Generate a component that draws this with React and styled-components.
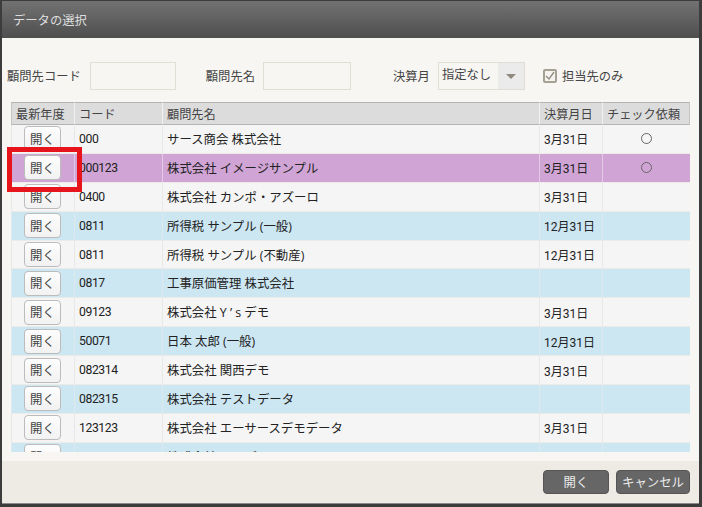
import React from "react";
import styled, { createGlobalStyle } from "styled-components";

const rows = [
	{ code: "000", name: "サース商会 株式会社", month: "3月31日", check: true },
	{ code: "000123", name: "株式会社 イメージサンプル", month: "3月31日", check: true, selected: true },
	{ code: "0400", name: "株式会社 カンポ・アズーロ", month: "3月31日" },
	{ code: "0811", name: "所得税 サンプル (一般)", month: "12月31日" },
	{ code: "0811", name: "所得税 サンプル (不動産)", month: "12月31日" },
	{ code: "0817", name: "工事原価管理 株式会社", month: "" },
	{ code: "09123", name: "株式会社 Y ’ s デモ", month: "3月31日" },
	{ code: "50071", name: "日本 太郎 (一般)", month: "12月31日" },
	{ code: "082314", name: "株式会社 関西デモ", month: "3月31日" },
	{ code: "082315", name: "株式会社 テストデータ", month: "" },
	{ code: "123123", name: "株式会社 エーサースデモデータ", month: "3月31日" },
	{ code: "", name: "株式会社 サンプル", month: "" },
];

const stripes = ["#f5f5f5", "#cce6f2"];
const stripeOrder = [0, 0, 0, 1, 0, 1, 0, 1, 0, 1, 0, 1];

const GlobalStyle = createGlobalStyle`
	html, body {
		margin: 0;
		padding: 0;
		background: #3c3c3c;
	}
	body {
		font-family: "Open Sans", "Noto Sans CJK JP", sans-serif;
		font-size: 12.3px;
		color: #333;
	}
`;

const Dialog = styled.div`
	width: 702px;
	height: 507px;
	box-sizing: border-box;
	display: flex;
	flex-direction: column;
	border: solid 1px #3c3c3c;
	border-width: 1px 3px 3px 2px;
	position: relative;
	overflow: hidden;
`;

const TitleBar = styled.div`
	height: 37px;
	flex: none;
	display: flex;
	align-items: center;
	padding-left: 11px;
	color: #dedede;
	font-size: 12.3px;
	background: linear-gradient(#727272, #4e4e4e);
`;

const Content = styled.div`
	flex: 1;
	min-height: 0;
	background: #f7f6f2;
	padding: 24px 9px 9px 9px;
	display: flex;
	flex-direction: column;
`;

const FilterRow = styled.div`
	height: 28px;
	flex: none;
	display: flex;
	align-items: center;
	margin: 0 0 12px -4px;
`;

const FieldLabel = styled.label`
	color: #444;
	white-space: nowrap;
	margin-left: ${(p) => p.$gap}px;
	margin-right: ${(p) => p.$after || 8}px;
`;

const TextInput = styled.div`
	width: ${(p) => p.$width}px;
	height: 28px;
	box-sizing: border-box;
	border: solid 1px #e1dfd5;
	background: #f7f6f2;
`;

const Select = styled.div`
	width: 87px;
	height: 28px;
	box-sizing: border-box;
	border: solid 1px #e1dfd5;
	display: flex;
	align-items: stretch;
	color: #444;
	.value {
		flex: 1;
		line-height: 24px;
		padding-left: 3px;
		white-space: nowrap;
	}
	.arrow {
		width: 26px;
		background: #ebebeb;
		display: flex;
		align-items: center;
		justify-content: center;
	}
	.arrow::after {
		content: "";
		border: solid 5px transparent;
		border-top: solid 5px #8f8a7c;
		margin-top: 5px;
	}
`;

const CheckLabel = styled.label`
	display: flex;
	align-items: center;
	gap: 5px;
	margin-left: 18px;
	color: #444;
	white-space: nowrap;
`;

const CheckBox = styled.span`
	width: 14px;
	height: 14px;
	box-sizing: border-box;
	border: solid 2px #a5a294;
	border-radius: 2px;
	background: #f4f3ef;
	display: flex;
	align-items: center;
	justify-content: center;
`;

const GridWrap = styled.div`
	flex: 1;
	min-height: 0;
	overflow: hidden;
	width: 679px;
`;

const Table = styled.div`
	display: grid;
	grid-template-columns: 63px 88px 377px 63px 88px;
`;

const HeadCell = styled.div`
	height: 21px;
	background: #dcdcdc;
	border-top: solid 1px #b4b4b4;
	border-bottom: solid 1px #b4b4b4;
	border-left: solid 1px ${(p) => (p.$first ? "#c4c4c4" : "#f2f2f2")};
	border-right: ${(p) => (p.$last ? "solid 1px #c4c4c4" : "none")};
	display: flex;
	align-items: center;
	padding-left: 4px;
	color: #444;
	font-size: 12.2px;
	white-space: nowrap;
	overflow: hidden;
	min-width: 0;
`;

const Cell = styled.div`
	height: 27.9px;
	background: ${(p) => (p.$selected ? "#d0a5d5" : stripes[p.$stripe])};
	border-bottom: solid 1px #ecebe8;
	border-left: solid 1px ${(p) => (p.$selected ? "#e2cce5" : p.$stripe ? "#dce9ef" : "#e8e8e8")};
	display: flex;
	align-items: center;
	justify-content: ${(p) => (p.$center ? "center" : "flex-start")};
	padding-left: ${(p) => (p.$center ? 0 : 4)}px;
	padding-right: ${(p) => (p.$center ? 1 : 0)}px;
	color: #222;
	font-size: ${(p) => p.$size || 12.4}px;
	font-family: ${(p) => (p.$digits ? '"Roboto", "Noto Sans CJK JP", sans-serif' : "inherit")};
	letter-spacing: ${(p) => p.$tight || 0}px;
	white-space: nowrap;
	min-width: 0;
`;

const OpenButton = styled.button`
	width: 37px;
	height: 25px;
	padding: 0;
	box-sizing: border-box;
	border: solid 1px #bcbcbc;
	border-radius: 4px;
	background: linear-gradient(#fdfdfd, #f2f2f2);
	color: #444;
	font-family: inherit;
	font-size: 12.4px;
`;

const Circle = styled.span`
	width: 11px;
	height: 11px;
	box-sizing: border-box;
	border: solid 1px #666;
	border-radius: 50%;
	display: block;
`;

const Footer = styled.div`
	height: 43px;
	box-sizing: border-box;
	flex: none;
	background: #eeebe4;
	border-bottom: solid 1px #8a8a8a;
	display: flex;
	align-items: center;
	justify-content: flex-end;
	gap: 7px;
	padding-right: 9px;
`;

const FooterButton = styled.button`
	width: ${(p) => p.$width}px;
	height: 24px;
	padding: 0;
	border: solid 1px #555;
	border-radius: 4px;
	background: #666;
	color: #ececec;
	font-family: inherit;
	font-size: 12.4px;
`;

const Highlight = styled.div`
	position: absolute;
	left: 5px;
	top: 146px;
	width: 75px;
	height: 45px;
	box-sizing: border-box;
	border: solid 5px #e8141c;
	pointer-events: none;
`;

const App = () => {
	return (
		<Dialog>
			<GlobalStyle />
			<TitleBar>データの選択</TitleBar>
			<Content>
				<FilterRow>
					<FieldLabel $gap={0} $after={9}>
						顧問先コード
					</FieldLabel>
					<TextInput $width={86} />
					<FieldLabel $gap={30}>顧問先名</FieldLabel>
					<TextInput $width={88} />
					<FieldLabel $gap={42}>決算月</FieldLabel>
					<Select>
						<span className="value">指定なし</span>
						<span className="arrow" />
					</Select>
					<CheckLabel>
						<CheckBox>
							<svg width="10" height="10" viewBox="0 0 10 10">
								<path d="M1 5l3 3 5-7" fill="none" stroke="#8f8c7e" strokeWidth="1.3" />
							</svg>
						</CheckBox>
						担当先のみ
					</CheckLabel>
				</FilterRow>
				<GridWrap>
					<Table>
						<HeadCell $first>最新年度</HeadCell>
						<HeadCell>コード</HeadCell>
						<HeadCell>顧問先名</HeadCell>
						<HeadCell>決算月日</HeadCell>
						<HeadCell $last>チェック依頼</HeadCell>
						{rows.map((row, i) => {
							const cellProps = { $stripe: stripeOrder[i], $selected: row.selected };
							return (
								<React.Fragment key={i}>
									<Cell {...cellProps} $center>
										<OpenButton>開く</OpenButton>
									</Cell>
									<Cell {...cellProps} $digits $size={12.2} $tight={-0.4}>
										{row.code}
									</Cell>
									<Cell {...cellProps}>{row.name}</Cell>
									<Cell {...cellProps} $digits $size={12}>
										{row.month}
									</Cell>
									<Cell {...cellProps} $center>
										{row.check && <Circle />}
									</Cell>
								</React.Fragment>
							);
						})}
					</Table>
				</GridWrap>
			</Content>
			<Footer>
				<FooterButton $width={66}>開く</FooterButton>
				<FooterButton $width={74}>キャンセル</FooterButton>
			</Footer>
			<Highlight />
		</Dialog>
	);
};

export default App;
